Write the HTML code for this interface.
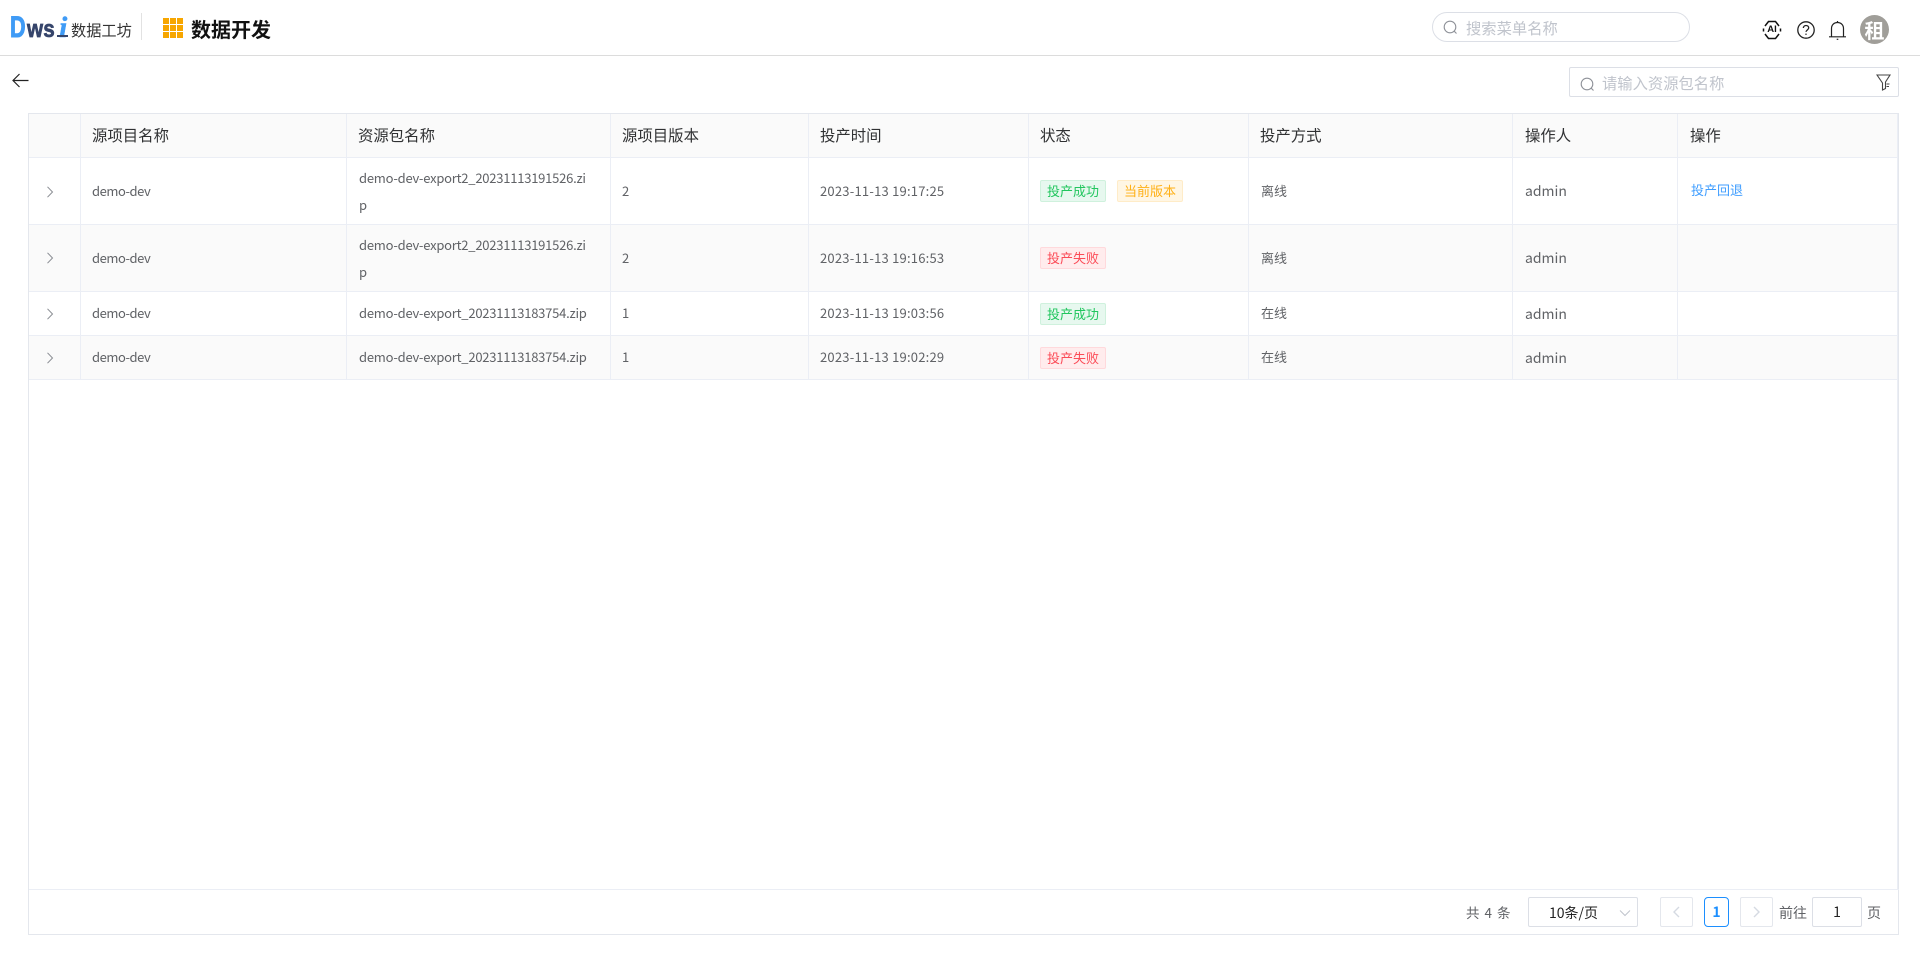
<!DOCTYPE html>
<html lang="zh"><head><meta charset="utf-8"><title>数据开发</title>
<style>
*{box-sizing:border-box}
html,body{margin:0;padding:0;width:1920px;height:962px;overflow:hidden;background:#fff}
body{font-family:"Liberation Sans","Noto Sans CJK SC",sans-serif;color:#606266;position:relative}
.a{position:absolute;white-space:nowrap}
.h{position:absolute;left:0;height:1px;background:#ebeef5}
.v{position:absolute;width:1px;background:#ebeef5}
.th{position:absolute;font-size:15.4px;line-height:20px;top:125px;color:#303133;white-space:nowrap;font-family:"Noto Sans CJK SC",sans-serif}
.t{position:absolute;font-size:13px;line-height:20px;color:#606266;white-space:nowrap;font-family:"Noto Sans CJK SC",sans-serif}
.d{letter-spacing:-.45px}
.z{letter-spacing:-.23px}
.tm{letter-spacing:.22px}
.ad{position:absolute;font-size:14px;line-height:20px;color:#606266;font-family:"Noto Sans CJK SC",sans-serif}
.tag{position:absolute;width:66px;height:22px;border:1px solid;border-radius:2px;font-size:13px;line-height:20px;text-align:center;font-family:"Noto Sans CJK SC",sans-serif}
.ok{background:#e7f8ef;border-color:#cff1dd;color:#21c65e}
.no{background:#ffeced;border-color:#ffd9dc;color:#fb4b57}
.cur{background:#fff6e4;border-color:#ffecc8;color:#ffb016}
.pb{position:absolute;top:897px;height:30px;border:1px solid #e4e7ed;border-radius:2px;background:#fff}
</style></head><body>

<div class="a" style="left:0;top:55px;width:1920px;height:1px;background:#dcdcdc"></div>
<div class="a" style="left:10px;top:10px;font:700 30px/36px 'Liberation Sans',sans-serif;color:#3f9bf6;-webkit-text-stroke:1px #3f9bf6;transform:scaleX(.72);transform-origin:left">D</div>
<div class="a" style="left:27px;top:14px;font:700 24px/32px 'Liberation Sans',sans-serif;color:#36456b;-webkit-text-stroke:.7px #36456b;letter-spacing:.3px;transform:scaleX(.86);transform-origin:left">ws</div>
<div class="a" style="left:59px;top:10px;font:italic 700 30px/36px 'Liberation Serif',serif;color:#3f9bf6;-webkit-text-stroke:.4px #3f9bf6">i</div>
<div class="a" style="left:57px;top:35px;width:11px;height:2px;background:#36456b"></div>
<div class="a" style="left:71px;top:19px;font:15.2px/22px 'Noto Sans CJK SC',sans-serif;color:#333">数据工坊</div>
<div class="a" style="left:141px;top:13px;width:1px;height:27px;background:#e2e2e2"></div>
<svg class="a" style="left:163px;top:18px" width="20" height="20" viewBox="0 0 20 20" fill="#f7a600"><rect width="6" height="6"/><rect x="7" width="6" height="6"/><rect x="14" width="6" height="6"/><rect y="7" width="6" height="6"/><rect x="7" y="7" width="6" height="6"/><rect x="14" y="7" width="6" height="6"/><rect y="14" width="6" height="6"/><rect x="7" y="14" width="6" height="6"/><rect x="14" y="14" width="6" height="6"/></svg>
<div class="a" style="left:191px;top:15px;font:700 20px/28px 'Noto Sans CJK SC',sans-serif;color:#111">数据开发</div>

<div class="a" style="left:1432px;top:12px;width:258px;height:30px;border:1px solid #dcdfe6;border-radius:15px"></div>
<svg class="a" style="left:1443px;top:20px" width="15" height="15" viewBox="0 0 15 15" fill="none" stroke="#8f9299" stroke-width="1.100"><circle cx="7" cy="7" r="5.800"/><path d="M11.200 11.200l2.300 2.300"/></svg>
<div class="a" style="left:1466px;top:17px;font:15.300px/22px 'Noto Sans CJK SC',sans-serif;color:#c0c4cc">搜索菜单名称</div>

<svg class="a" style="left:1762px;top:20px" width="20" height="20" viewBox="0 0 20 20" fill="none" stroke="#111" stroke-width="1.500"><path d="M3 6L6.500 1.500h7L17 6"/><path d="M3 14l3.500 4.500h7L17 14"/><path d="M1.500 8.500v3M18.500 8.500v3"/></svg>
<div class="a" style="left:1762px;top:23px;width:20px;text-align:center;font:700 9.500px/14px 'Liberation Sans',sans-serif;color:#111">AI</div>
<svg class="a" style="left:1797px;top:21px" width="18" height="18" viewBox="0 0 18 18" fill="none" stroke="#222" stroke-width="1.300"><circle cx="9" cy="9" r="8.200"/><path d="M6.400 7c0-1.500 1.100-2.500 2.600-2.500s2.700 1 2.700 2.400c0 2-2.700 2.100-2.700 4"/><path d="M9 12.600v1.300"/></svg>
<svg class="a" style="left:1828px;top:20px" width="19" height="20" viewBox="0 0 19 20" fill="none" stroke="#222" stroke-width="1.200"><path d="M1 16.800h17"/><path d="M3.500 16.500V8.500C3.500 5 6 2.500 9.500 2.500s6 2.500 6 6v8"/><path d="M9.500 1v1.500"/><path d="M8.700 19.300h1.600"/></svg>
<div class="a" style="left:1860px;top:15px;width:29px;height:29px;border-radius:50%;background:#a09e99;color:#fff;font:700 20px/29px 'Noto Sans CJK SC',sans-serif;text-align:center">租</div>

<svg class="a" style="left:12px;top:73px" width="17" height="15" viewBox="0 0 17 15" fill="none" stroke="#222" stroke-width="1.200"><path d="M16.500 7.500H1M7.500 1L1 7.500 7.500 14"/></svg>

<div class="a" style="left:1569px;top:67px;width:330px;height:30px;border:1px solid #dcdfe6;border-radius:2px"></div>
<svg class="a" style="left:1580px;top:77px" width="15" height="15" viewBox="0 0 15 15" fill="none" stroke="#8f9299" stroke-width="1.100"><circle cx="7" cy="7" r="5.800"/><path d="M11.200 11.200l2.300 2.300"/></svg>
<div class="a" style="left:1602px;top:72px;font:15.300px/22px 'Noto Sans CJK SC',sans-serif;color:#c0c4cc">请输入资源包名称</div>
<svg class="a" style="left:1876px;top:74px" width="15" height="17" viewBox="0 0 15 17" fill="none" stroke="#444" stroke-width="1.100"><path d="M1 1h13L9.500 8v6.500L6.500 16V9z"/><path d="M10.500 10h3M10.500 12.500h2.500"/></svg>

<!-- table frame -->
<div class="a" style="left:28px;top:113px;width:1871px;height:822px;border:1px solid #e4e7ed"></div>
<div class="a" style="left:29px;top:114px;width:1868px;height:43px;background:#fafafa"></div>
<div class="a" style="left:29px;top:225px;width:1868px;height:66px;background:#fafafa"></div>
<div class="a" style="left:29px;top:336px;width:1868px;height:43px;background:#fafafa"></div>
<div class="h" style="left:29px;top:157px;width:1868px"></div>
<div class="h" style="left:29px;top:224px;width:1868px"></div>
<div class="h" style="left:29px;top:291px;width:1868px"></div>
<div class="h" style="left:29px;top:335px;width:1868px"></div>
<div class="h" style="left:29px;top:379px;width:1868px"></div>
<div class="h" style="left:29px;top:889px;width:1870px"></div>
<div class="v" style="left:80px;top:114px;height:266px"></div>
<div class="v" style="left:346px;top:114px;height:266px"></div>
<div class="v" style="left:610px;top:114px;height:266px"></div>
<div class="v" style="left:808px;top:114px;height:266px"></div>
<div class="v" style="left:1028px;top:114px;height:266px"></div>
<div class="v" style="left:1248px;top:114px;height:266px"></div>
<div class="v" style="left:1512px;top:114px;height:266px"></div>
<div class="v" style="left:1677px;top:114px;height:266px"></div>
<div class="v" style="left:1897px;top:114px;height:775px"></div>

<div class="th" style="left:92px">源项目名称</div>
<div class="th" style="left:358px">资源包名称</div>
<div class="th" style="left:622px">源项目版本</div>
<div class="th" style="left:820px">投产时间</div>
<div class="th" style="left:1040px">状态</div>
<div class="th" style="left:1260px">投产方式</div>
<div class="th" style="left:1525px">操作人</div>
<div class="th" style="left:1690px">操作</div>

<svg class="a" style="left:46px;top:186px" width="8" height="12" viewBox="0 0 8 12" fill="none" stroke="#8a8d93"><path d="M1.500 .8L6.500 6l-5 5.200"/></svg>
<svg class="a" style="left:46px;top:252px" width="8" height="12" viewBox="0 0 8 12" fill="none" stroke="#8a8d93"><path d="M1.500 .8L6.500 6l-5 5.200"/></svg>
<svg class="a" style="left:46px;top:308px" width="8" height="12" viewBox="0 0 8 12" fill="none" stroke="#8a8d93"><path d="M1.500 .8L6.500 6l-5 5.200"/></svg>
<svg class="a" style="left:46px;top:352px" width="8" height="12" viewBox="0 0 8 12" fill="none" stroke="#8a8d93"><path d="M1.500 .8L6.500 6l-5 5.200"/></svg>

<div class="t d" style="left:92px;top:181px">demo-dev</div>
<div class="t z" style="left:359px;top:168px">demo-dev-export2_20231113191526.zi</div>
<div class="t" style="left:359px;top:195px">p</div>
<div class="t" style="left:622px;top:181px">2</div>
<div class="t tm" style="left:820px;top:181px">2023-11-13 19:17:25</div>
<div class="tag ok" style="left:1040px;top:180px">投产成功</div>
<div class="tag cur" style="left:1117px;top:180px">当前版本</div>
<div class="t" style="left:1261px;top:181px">离线</div>
<div class="ad" style="left:1525px;top:181px">admin</div>
<div class="t" style="left:1691px;top:180px;color:#409eff">投产回退</div>

<div class="t d" style="left:92px;top:248px">demo-dev</div>
<div class="t z" style="left:359px;top:235px">demo-dev-export2_20231113191526.zi</div>
<div class="t" style="left:359px;top:262px">p</div>
<div class="t" style="left:622px;top:248px">2</div>
<div class="t tm" style="left:820px;top:248px">2023-11-13 19:16:53</div>
<div class="tag no" style="left:1040px;top:247px">投产失败</div>
<div class="t" style="left:1261px;top:248px">离线</div>
<div class="ad" style="left:1525px;top:248px">admin</div>

<div class="t d" style="left:92px;top:303px">demo-dev</div>
<div class="t z" style="left:359px;top:303px">demo-dev-export_20231113183754.zip</div>
<div class="t" style="left:622px;top:303px">1</div>
<div class="t tm" style="left:820px;top:303px">2023-11-13 19:03:56</div>
<div class="tag ok" style="left:1040px;top:303px">投产成功</div>
<div class="t" style="left:1261px;top:303px">在线</div>
<div class="ad" style="left:1525px;top:304px">admin</div>

<div class="t d" style="left:92px;top:347px">demo-dev</div>
<div class="t z" style="left:359px;top:347px">demo-dev-export_20231113183754.zip</div>
<div class="t" style="left:622px;top:347px">1</div>
<div class="t tm" style="left:820px;top:347px">2023-11-13 19:02:29</div>
<div class="tag no" style="left:1040px;top:347px">投产失败</div>
<div class="t" style="left:1261px;top:347px">在线</div>
<div class="ad" style="left:1525px;top:348px">admin</div>

<!-- pager -->
<div class="t" style="left:1466px;top:902px;font-size:13.500px;letter-spacing:1px">共 4 条</div>
<div class="pb" style="left:1528px;width:110px;border-color:#dcdfe6"></div>
<div class="t" style="left:1549px;top:903px;color:#222;font-size:14px">10条/页</div>
<svg class="a" style="left:1619px;top:909px" width="12" height="8" viewBox="0 0 12 8" fill="none" stroke="#c0c4cc"><path d="M1 1.500l5 5 5-5"/></svg>
<div class="pb" style="left:1660px;width:33px"></div>
<svg class="a" style="left:1672px;top:906px" width="9" height="12" viewBox="0 0 9 12" fill="none" stroke="#d5dae2" stroke-width="1.400"><path d="M7 1L2 6l5 5"/></svg>
<div class="pb" style="left:1704px;width:25px;border-color:#1c8fff;border-radius:4px"></div>
<div class="t" style="left:1704px;top:902px;width:25px;text-align:center;color:#1c8fff;font-weight:700;font-size:14px">1</div>
<div class="pb" style="left:1740px;width:33px"></div>
<svg class="a" style="left:1752px;top:906px" width="9" height="12" viewBox="0 0 9 12" fill="none" stroke="#d5dae2" stroke-width="1.400"><path d="M2 1l5 5-5 5"/></svg>
<div class="t" style="left:1779px;top:903px;font-size:14px">前往</div>
<div class="pb" style="left:1812px;width:50px;border-color:#dcdfe6"></div>
<div class="t" style="left:1812px;top:902px;width:50px;text-align:center;color:#222;font-size:14px">1</div>
<div class="t" style="left:1867px;top:903px;font-size:14px">页</div>
</body></html>
